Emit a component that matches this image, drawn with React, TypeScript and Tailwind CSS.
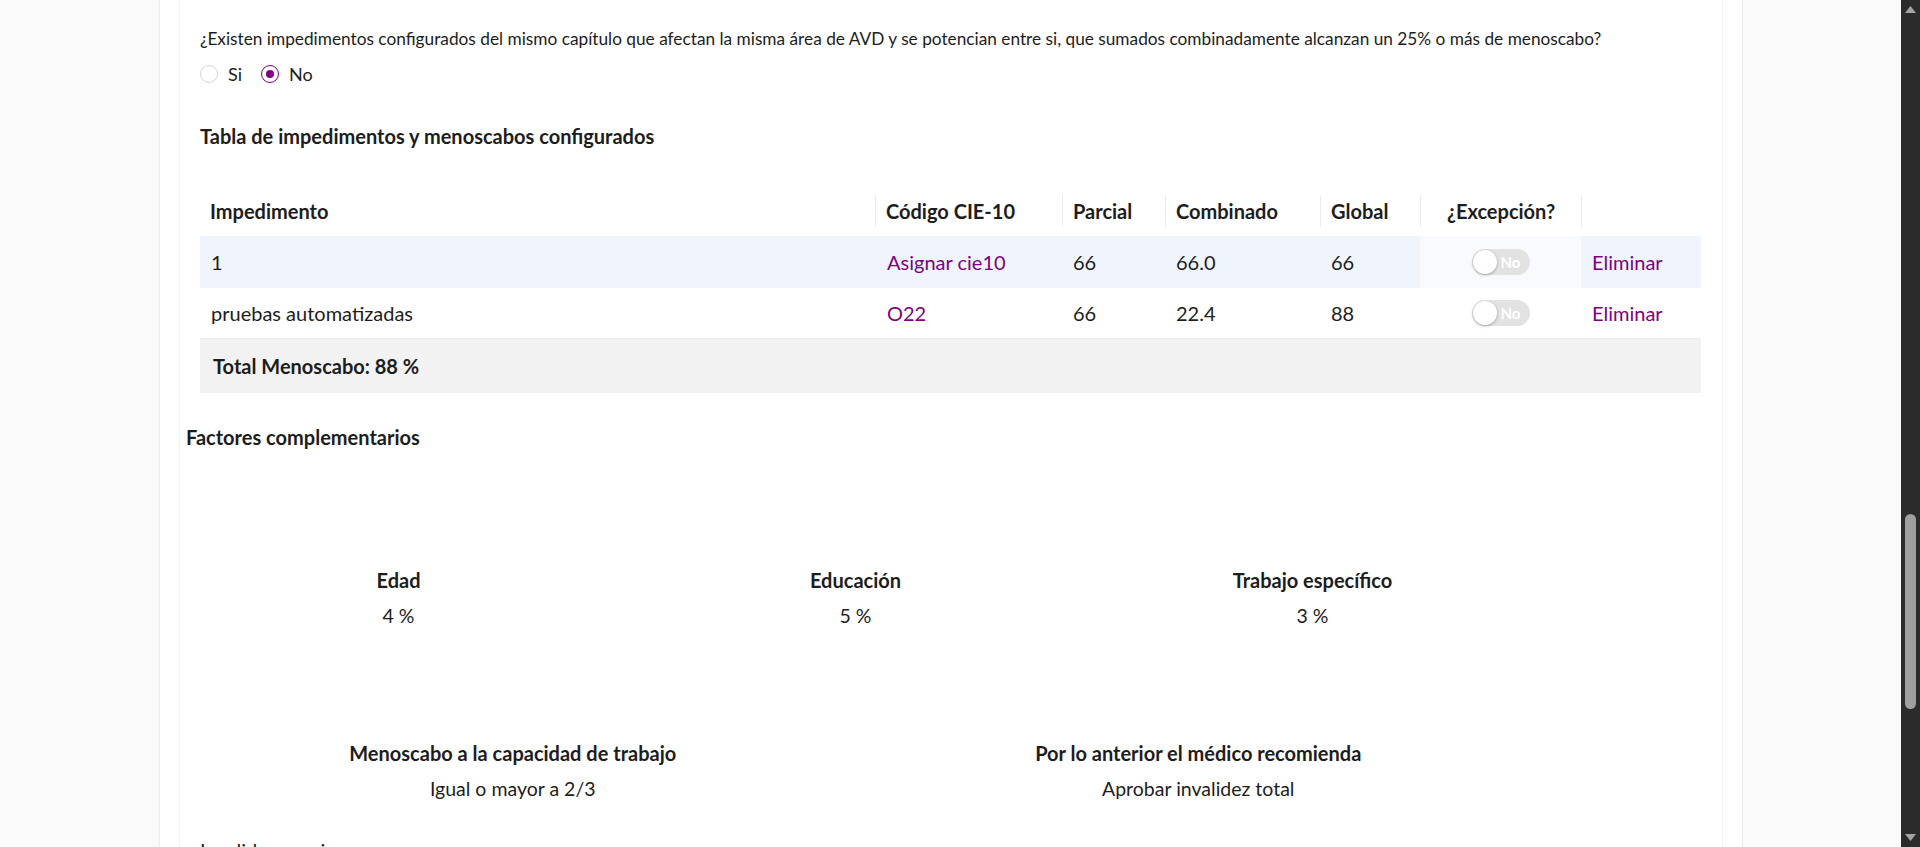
import { useState } from 'react';

interface Row {
    impedimento: string;
    codigo: string;
    parcial: string;
    combinado: string;
    global: string;
}

const rows: Row[] = [
    { impedimento: '1', codigo: 'Asignar cie10', parcial: '66', combinado: '66.0', global: '66' },
    { impedimento: 'pruebas automatizadas', codigo: 'O22', parcial: '66', combinado: '22.4', global: '88' },
];

const columns = [
    { label: 'Impedimento', width: 'w-[675px]' },
    { label: 'Código CIE-10', width: 'w-[187px]' },
    { label: 'Parcial', width: 'w-[103px]' },
    { label: 'Combinado', width: 'w-[155px]' },
    { label: 'Global', width: 'w-[100px]' },
    { label: '¿Excepción?', width: 'w-[161px]' },
    { label: '', width: 'w-[120px]' },
];

const Toggle = () => (
    <div className="relative w-[58px] h-[26px] rounded-full bg-[#e2e2e2] flex items-center">
        <div className="absolute left-[1px] top-[1px] w-[24px] h-[24px] rounded-full bg-white shadow-[0_1px_3px_rgba(0,0,0,0.3)]" />
        <span className="ml-auto mr-[9px] text-[15px] font-bold text-white">No</span>
    </div>
);

const Radio = ({ checked, label }: { checked: boolean; label: string }) => (
    <label className="flex items-center gap-[10px]">
        <span
            className={`w-[18px] h-[18px] rounded-full border flex items-center justify-center ${checked ? 'border-[#800080]' : 'border-[#d6d6d6]'}`}
        >
            {checked && <span className="w-[8px] h-[8px] rounded-full bg-[#800080]" />}
        </span>
        <span className="text-[18px]">{label}</span>
    </label>
);

const Scrollbar = () => (
    <div className="w-[19px] h-full bg-[#2b2b2b] flex flex-col items-center justify-between py-[6px]">
        <svg width="11" height="7" viewBox="0 0 11 7"><path d="M5.5 0L11 7H0z" fill="#a3a3a3" /></svg>
        <div className="flex-1 w-full flex flex-col items-center">
            <div className="h-[501px]" />
            <div className="w-[11px] h-[195px] rounded-full bg-[#9f9f9f]" />
        </div>
        <svg width="11" height="7" viewBox="0 0 11 7"><path d="M0 0H11L5.5 7z" fill="#a3a3a3" /></svg>
    </div>
);

export default function App() {
    const [answer] = useState('no');

    return (
        <div
            className="flex h-[847px] w-[1920px] overflow-hidden bg-[#fafafa] text-[#1d1d1d]"
            style={{ fontFamily: 'Lato, "Open Sans", sans-serif' }}
        >
            <div className="flex-1 pl-[159px]">
                <div className="w-[1584px] h-full bg-white border-x border-[#ededed] px-[19px]">
                    <div className="h-full border-x border-[#f4f4f4] pl-[20px] pr-[20px]">
                        <p className="pt-[27px] text-[17.25px] leading-[24px]">
                            ¿Existen impedimentos configurados del mismo capítulo que afectan la misma área de AVD y se potencian entre si, que sumados combinadamente alcanzan un 25% o más de menoscabo?
                        </p>
                        <div className="mt-[11px] flex items-center gap-[19px] h-[24px]">
                            <Radio checked={answer === 'si'} label="Si" />
                            <Radio checked={answer === 'no'} label="No" />
                        </div>

                        <h2 className="mt-[36px] text-[20px] leading-[28px] font-bold">Tabla de impedimentos y menoscabos configurados</h2>

                        <div className="mt-[36px] w-[1501px]">
                            <div className="flex h-[50px] items-center">
                                {columns.map((col, i) => (
                                    <div key={i} className={`${col.width} h-full flex items-center`}>
                                        {i > 0 && <div className="w-px h-[32px] bg-[#ececec]" />}
                                        <span className={`text-[20px] font-bold ${i === 5 ? 'flex-1 text-center' : 'pl-[10px]'}`}>{col.label}</span>
                                    </div>
                                ))}
                            </div>

                            {rows.map((row, i) => (
                                <div
                                    key={i}
                                    className={`flex items-center text-[20px] ${i === 0 ? 'h-[52px] bg-[#f0f5fd]' : 'h-[51px] border-b border-[#ececec]'}`}
                                >
                                    <div className="w-[675px] pl-[11px]">{row.impedimento}</div>
                                    <div className="w-[187px] pl-[12px] text-[#800080]">{row.codigo}</div>
                                    <div className="w-[103px] pl-[11px]">{row.parcial}</div>
                                    <div className="w-[155px] pl-[11px]">{row.combinado}</div>
                                    <div className="w-[100px] pl-[11px]">{row.global}</div>
                                    <div className={`w-[161px] h-full flex items-center justify-center ${i === 0 ? 'bg-[#f8fafe]' : ''}`}>
                                        <Toggle />
                                    </div>
                                    <div className="w-[120px] pl-[11px] text-[#800080]">Eliminar</div>
                                </div>
                            ))}

                            <div className="h-[54px] bg-[#f2f2f2] flex items-center pl-[13px] text-[20px] font-bold">
                                Total Menoscabo: 88 %
                            </div>
                        </div>

                        <h2 className="-ml-[14px] mt-[30px] text-[20px] leading-[28px] font-bold">Factores complementarios</h2>

                        <div className="-ml-[30px] w-[1371px] grid grid-cols-3 mt-[117px] text-center">
                            <div>
                                <div className="text-[20px] leading-[24px] font-bold">Edad</div>
                                <div className="mt-3 text-[19.5px] leading-[24px]">4 %</div>
                            </div>
                            <div>
                                <div className="text-[20px] leading-[24px] font-bold">Educación</div>
                                <div className="mt-3 text-[19.5px] leading-[24px]">5 %</div>
                            </div>
                            <div>
                                <div className="text-[20px] leading-[24px] font-bold">Trabajo específico</div>
                                <div className="mt-3 text-[19.5px] leading-[24px]">3 %</div>
                            </div>
                        </div>

                        <div className="-ml-[30px] w-[1371px] grid grid-cols-2 mt-[113px] text-center">
                            <div>
                                <div className="text-[20px] leading-[24px] font-bold">Menoscabo a la capacidad de trabajo</div>
                                <div className="mt-3 text-[19.5px] leading-[24px]">Igual o mayor a 2/3</div>
                            </div>
                            <div>
                                <div className="text-[20px] leading-[24px] font-bold">Por lo anterior el médico recomienda</div>
                                <div className="mt-3 text-[19.5px] leading-[24px]">Aprobar invalidez total</div>
                            </div>
                        </div>

                        <div className="mt-[37px] text-[20px] leading-[24px]">Invalidez previa</div>
                    </div>
                </div>
            </div>
            <Scrollbar />
        </div>
    );
}
